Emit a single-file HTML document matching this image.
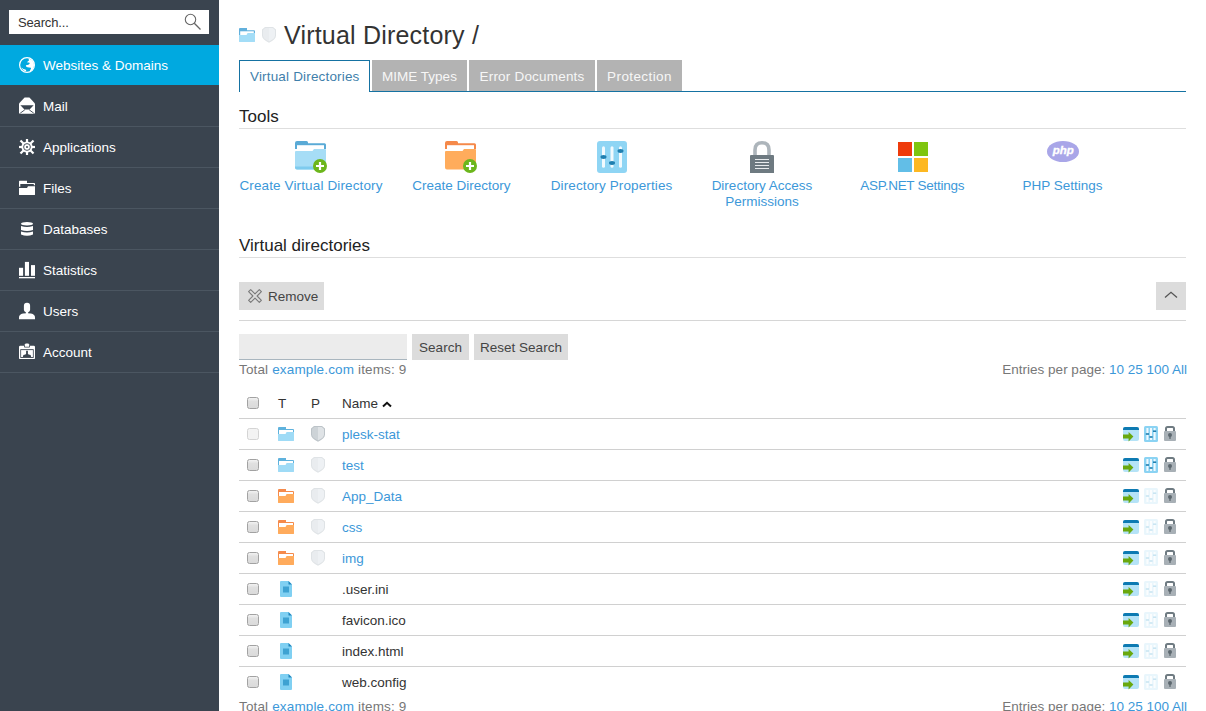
<!DOCTYPE html>
<html><head><meta charset="utf-8">
<style>
*{margin:0;padding:0;box-sizing:border-box}
html,body{width:1206px;height:711px;overflow:hidden;background:#fff;font-family:"Liberation Sans",sans-serif;font-size:13.5px;color:#333}
.a{position:absolute}
.t{position:absolute;white-space:nowrap;line-height:1.117}
svg{position:absolute;overflow:visible}
</style></head><body>

<div class="a" style="left:0;top:0;width:219px;height:711px;background:#3a444f"></div>
<div class="a" style="left:9px;top:10px;width:200px;height:24px;background:#fff"></div>
<div class="t" style="left:18px;top:16px;font-size:13px;color:#333;letter-spacing:-0.15px;">Search...</div>
<svg style="left:184px;top:13px" width="20" height="20"><circle cx="6.5" cy="6.5" r="5.2" fill="none" stroke="#666" stroke-width="1.1"/><line x1="10.3" y1="10.3" x2="16.5" y2="16.5" stroke="#666" stroke-width="1.3"/></svg>
<div class="a" style="left:0;top:45px;width:219px;height:40px;background:#00a9e0"></div>
<div class="t" style="left:43px;top:58px;font-size:13.5px;color:#fff;">Websites &amp; Domains</div>
<div class="a" style="left:0;top:126px;width:219px;height:1px;background:#4b5661"></div>
<div class="t" style="left:43px;top:99px;font-size:13.5px;color:#fff;">Mail</div>
<div class="a" style="left:0;top:167px;width:219px;height:1px;background:#4b5661"></div>
<div class="t" style="left:43px;top:140px;font-size:13.5px;color:#fff;">Applications</div>
<div class="a" style="left:0;top:208px;width:219px;height:1px;background:#4b5661"></div>
<div class="t" style="left:43px;top:181px;font-size:13.5px;color:#fff;">Files</div>
<div class="a" style="left:0;top:249px;width:219px;height:1px;background:#4b5661"></div>
<div class="t" style="left:43px;top:222px;font-size:13.5px;color:#fff;">Databases</div>
<div class="a" style="left:0;top:290px;width:219px;height:1px;background:#4b5661"></div>
<div class="t" style="left:43px;top:263px;font-size:13.5px;color:#fff;">Statistics</div>
<div class="a" style="left:0;top:331px;width:219px;height:1px;background:#4b5661"></div>
<div class="t" style="left:43px;top:304px;font-size:13.5px;color:#fff;">Users</div>
<div class="a" style="left:0;top:372px;width:219px;height:1px;background:#4b5661"></div>
<div class="t" style="left:43px;top:345px;font-size:13.5px;color:#fff;">Account</div>
<svg style="left:19px;top:57px" width="16" height="16" viewBox="0 0 16 16"><circle cx="8" cy="8" r="7.4" fill="none" stroke="#fff" stroke-width="1.2"/><path fill="#fff" d="M9.5,1.6 C12.8,2.3 15,5 15,8.2 C15,11 13.2,13.4 10.6,14.4 L11.2,13 C12,12.2 12.2,11.4 11.8,10.8 L8.6,10.2 C7.4,10 6.6,9 7,8.2 L9.4,7.8 L10.8,6.6 L10.2,5.4 L8.2,5.6 L8.6,4.4 L10,3.6 Z"/><path fill="#fff" d="M2.6,10.4 C3.6,11.6 5,12.2 6.4,12.4 L7.2,13.2 L7,14.3 C5.2,14 3.6,12.8 2.6,11.2 Z"/></svg>
<svg style="left:19px;top:97px" width="16" height="18" viewBox="0 0 16 18"><path fill="#fff" d="M5.6,0.6 H10.4 L16,6.4 V15.6 Q16,16.8 14.8,16.8 H1.2 Q0,16.8 0,15.6 V6.4 Z"/><path fill="#3a444f" d="M1.4,8.2 H14.6 L10.6,12.4 H5.4 Z"/><path stroke="#3a444f" stroke-width="0.9" d="M1.2,16.2 L5.8,12.8 M14.8,16.2 L10.2,12.8"/></svg>
<svg style="left:19px;top:139px" width="16" height="16" viewBox="0 0 16 16"><rect x="6.9" y="0" width="2.2" height="4" fill="#fff" transform="rotate(0 8 8)"/><rect x="6.9" y="-1.2" width="2.2" height="5.2" fill="#fff" transform="rotate(45 8 8)"/><rect x="6.9" y="0" width="2.2" height="4" fill="#fff" transform="rotate(90 8 8)"/><rect x="6.9" y="-1.2" width="2.2" height="5.2" fill="#fff" transform="rotate(135 8 8)"/><rect x="6.9" y="0" width="2.2" height="4" fill="#fff" transform="rotate(180 8 8)"/><rect x="6.9" y="-1.2" width="2.2" height="5.2" fill="#fff" transform="rotate(225 8 8)"/><rect x="6.9" y="0" width="2.2" height="4" fill="#fff" transform="rotate(270 8 8)"/><rect x="6.9" y="-1.2" width="2.2" height="5.2" fill="#fff" transform="rotate(315 8 8)"/><circle cx="8" cy="8" r="5.6" fill="#fff"/><circle cx="8" cy="8" r="3.4" fill="none" stroke="#3a444f" stroke-width="0.9"/><circle cx="8" cy="8" r="1" fill="#3a444f"/></svg>
<svg style="left:19px;top:180px" width="16" height="16" viewBox="0 0 16 16"><path fill="#fff" d="M0,1.4 Q0,0.7 0.7,0.7 H8 V2.9 H15.2 Q16,2.9 16,3.7 V5.2 H14.8 V4.1 H1.3 V6.8 H0 Z"/><path fill="#fff" d="M0,7.9 H8 L9,6.2 H16 V14.4 Q16,15.1 15.3,15.1 H0.7 Q0,15.1 0,14.4 Z"/></svg>
<svg style="left:21px;top:222px" width="12" height="15" viewBox="0 0 12 15"><ellipse cx="6" cy="1.8" rx="6" ry="1.7" fill="#fff"/><path fill="#fff" d="M0,4 Q6,6 12,4 V8 Q6,10 0,8 Z"/><path fill="#fff" d="M0,9.6 Q6,11.6 12,9.6 V12.6 Q6,15 0,12.6 Z"/></svg>
<svg style="left:19px;top:261px" width="16" height="18" viewBox="0 0 16 18"><rect x="0" y="6.8" width="4.1" height="8" fill="#fff"/><rect x="5.9" y="0.9" width="4.1" height="13.9" fill="#fff"/><rect x="12" y="4.1" width="4" height="10.7" fill="#fff"/><rect x="0" y="16" width="16" height="1.3" fill="#fff"/></svg>
<svg style="left:19px;top:302px" width="16" height="18" viewBox="0 0 16 18"><rect x="4.9" y="0.7" width="6.2" height="9.6" rx="3" fill="#fff"/><rect x="6.8" y="8" width="2.4" height="4" fill="#fff"/><path fill="#fff" d="M0,15.5 Q0,12.6 4,11.6 Q8,10.8 12,11.6 Q16,12.6 16,15.5 V17.2 H0 Z"/></svg>
<svg style="left:19px;top:343px" width="16" height="17" viewBox="0 0 16 17"><path fill="#fff" d="M0,4 Q0,2.8 1.2,2.8 H14.8 Q16,2.8 16,4 V14.9 Q16,16.1 14.8,16.1 H1.2 Q0,16.1 0,14.9 Z"/><rect x="5" y="0" width="6" height="4.6" rx="0.8" fill="#3a444f"/><path fill="#fff" d="M6.7,0.5 H9.3 L10.2,1.6 V3.8 H5.8 V1.6 Z"/><rect x="1.3" y="6.2" width="13.4" height="8.7" fill="#3a444f"/><rect x="2.1" y="7.1" width="11.8" height="6.9" fill="#fff"/><path fill="#3a444f" d="M7.1,7.8 H8.9 V10.8 L9.6,11.6 L11.6,12 L12.2,14 H3.8 L4.4,12 L6.4,11.6 L7.1,10.8 Z"/></svg>
<svg style="left:239px;top:28px" width="16" height="14" viewBox="0 0 16 14"><path fill="#62b0dc" d="M0,1 Q0,0 1,0 H8 V2.2 H15 Q16,2.2 16,3.2 V12 H0 Z"/><rect x="1.2" y="3.3" width="13.6" height="5" fill="#fff"/><path fill="#a3ddf7" d="M0,7 H7.6 Q8,5 9,5 H16 V13.6 Q16,14 15.6,14 H0.4 Q0,14 0,13.6 Z"/></svg>
<svg style="left:262px;top:27px" width="14" height="16" viewBox="0 0 14 16"><path fill="#dfe3e6" d="M3,0 H11 L14,2.4 V8.5 Q14,12.5 7,15.7 Q0,12.5 0,8.5 V2.4 Z"/><path fill="#e9ecef" d="M3.3,1 H7 V14.5 Q1,11.8 1,8.5 V2.9 Z"/><path fill="#eef1f4" d="M7,1 H10.7 L13,2.9 V8.5 Q13,11.8 7,14.5 Z"/></svg>
<div class="t" style="left:284px;top:22px;font-size:25px;color:#333;letter-spacing:0.2px;">Virtual Directory /</div>
<div class="a" style="left:239px;top:91px;width:947px;height:1px;background:#1572a2"></div>
<div class="a" style="left:239px;top:60px;width:131px;height:32px;border:1px solid #1572a2;border-bottom:none;background:#fff"></div>
<div class="t" style="left:250px;top:69px;font-size:13.5px;color:#3f7fab;letter-spacing:0.17px;">Virtual Directories</div>
<div class="a" style="left:372px;top:60px;width:95px;height:31px;background:#b3b3b3"></div>
<div class="t" style="left:219.5px;width:400px;text-align:center;top:69px;font-size:13.5px;color:#f7f7f7;letter-spacing:0px;">MIME Types</div>
<div class="a" style="left:469px;top:60px;width:126px;height:31px;background:#b3b3b3"></div>
<div class="t" style="left:332.0px;width:400px;text-align:center;top:69px;font-size:13.5px;color:#f7f7f7;letter-spacing:0.2px;">Error Documents</div>
<div class="a" style="left:597px;top:60px;width:85px;height:31px;background:#b3b3b3"></div>
<div class="t" style="left:439.5px;width:400px;text-align:center;top:69px;font-size:13.5px;color:#f7f7f7;letter-spacing:0.4px;">Protection</div>
<div class="t" style="left:239px;top:107px;font-size:17px;color:#222;">Tools</div>
<div class="a" style="left:239px;top:128px;width:947px;height:1px;background:#dedede"></div>
<div class="t" style="left:111.0px;width:400px;text-align:center;top:178px;font-size:13.5px;color:#3c98d9;letter-spacing:0.13px;">Create Virtual Directory</div>
<div class="t" style="left:261.3px;width:400px;text-align:center;top:178px;font-size:13.5px;color:#3c98d9;letter-spacing:0px;">Create Directory</div>
<div class="t" style="left:411.6px;width:400px;text-align:center;top:178px;font-size:13.5px;color:#3c98d9;letter-spacing:0.12px;">Directory Properties</div>
<div class="t" style="left:561.9000000000001px;width:400px;text-align:center;top:178px;font-size:13.5px;color:#3c98d9;">Directory Access</div>
<div class="t" style="left:561.9000000000001px;width:400px;text-align:center;top:194px;font-size:13.5px;color:#3c98d9;">Permissions</div>
<div class="t" style="left:712.2px;width:400px;text-align:center;top:178px;font-size:13.5px;color:#3c98d9;letter-spacing:-0.28px;">ASP.NET Settings</div>
<div class="t" style="left:862.5px;width:400px;text-align:center;top:178px;font-size:13.5px;color:#3c98d9;letter-spacing:0px;">PHP Settings</div>
<svg style="left:295px;top:141px" width="33" height="33" viewBox="0 0 33 33"><path fill="#5aaad6" d="M0,2 Q0,0 2,0 H11.5 Q13,0 13,1.5 V2.2 H29.5 Q31,2.2 31,3.7 V8 H0 Z"/><path fill="#fff" d="M2,4.2 H29 V10 H2 Z"/><path fill="#a6ddf6" d="M0,11 Q0,10 1,10 H17.5 L19,8 H30 Q31,8 31,9 V26.5 Q31,28.5 29,28.5 H2 Q0,28.5 0,26.5 Z"/><path fill="#7ecbee" d="M0,25.5 H31 V26.5 Q31,28.5 29,28.5 H2 Q0,28.5 0,26.5 Z"/><circle cx="25" cy="25" r="7" fill="#6cb61c"/><path stroke="#fff" stroke-width="2.2" d="M25,21 V29 M21,25 H29"/></svg>
<svg style="left:445px;top:141px" width="33" height="33" viewBox="0 0 33 33"><path fill="#f5894a" d="M0,2 Q0,0 2,0 H11.5 Q13,0 13,1.5 V2.2 H29.5 Q31,2.2 31,3.7 V8 H0 Z"/><path fill="#fff" d="M2,4.2 H29 V10 H2 Z"/><path fill="#ffac5c" d="M0,11 Q0,10 1,10 H17.5 L19,8 H30 Q31,8 31,9 V26.5 Q31,28.5 29,28.5 H2 Q0,28.5 0,26.5 Z"/><circle cx="25" cy="25" r="7" fill="#6cb61c"/><path stroke="#fff" stroke-width="2.2" d="M25,21 V29 M21,25 H29"/></svg>
<svg style="left:597px;top:141px" width="30" height="32" viewBox="0 0 30 32"><rect x="0" y="0" width="30" height="32" rx="3" fill="#8fd5f4"/><rect x="5" y="5.3" width="3" height="21.5" rx="1.5" fill="#f2fafe"/><rect x="13.5" y="5.3" width="3" height="21.5" rx="1.5" fill="#f2fafe"/><rect x="22" y="5.3" width="3" height="21.5" rx="1.5" fill="#f2fafe"/><ellipse cx="6.5" cy="16" rx="3" ry="1.9" fill="#1f7fb0"/><ellipse cx="15" cy="22" rx="3" ry="1.9" fill="#1f7fb0"/><ellipse cx="23.5" cy="10" rx="3" ry="1.9" fill="#1f7fb0"/></svg>
<svg style="left:750px;top:141px" width="24" height="32" viewBox="0 0 24 32"><path fill="none" stroke="#adb5bb" stroke-width="3.6" d="M5,15 V9 Q5,1.8 12,1.8 Q19,1.8 19,9 V15"/><path fill="#6e7a81" d="M0,15 Q0,14 1,14 H23 Q24,14 24,15 V32 H0 Z"/><path stroke="#e8ebed" stroke-width="1" d="M5,18.5 H19 M5,21.5 H19 M5,24.5 H19 M5,27.5 H19"/></svg>
<svg style="left:898px;top:142px" width="30" height="30" viewBox="0 0 30 30"><rect x="0" y="0" width="14" height="14" fill="#ee3b0b"/><rect x="16" y="0" width="14" height="14" fill="#7fc50f"/><rect x="0" y="16" width="14" height="14" fill="#62bee7"/><rect x="16" y="16" width="14" height="14" fill="#fdb822"/></svg>
<svg style="left:1047px;top:141px" width="32" height="21" viewBox="0 0 32 21"><ellipse cx="16" cy="10.5" rx="16" ry="10.5" fill="#a9a6e8"/><text x="16.3" y="12.6" text-anchor="middle" font-family="Liberation Sans" font-weight="bold" font-style="italic" font-size="11.5" fill="#fff" stroke="#fff" stroke-width="0.35">php</text></svg>
<div class="t" style="left:239px;top:236px;font-size:17px;color:#222;">Virtual directories</div>
<div class="a" style="left:239px;top:257px;width:947px;height:1px;background:#dedede"></div>
<div class="a" style="left:239px;top:282px;width:85px;height:28px;background:#dcdcdc"></div>
<svg style="left:248px;top:289px" width="14" height="14" viewBox="0 0 14 14"><path fill="none" stroke="#7a7a7a" stroke-width="1.1" stroke-linejoin="round" d="M2.70,0.60 L7.00,4.90 L11.30,0.60 L13.40,2.70 L9.10,7.00 L13.40,11.30 L11.30,13.40 L7.00,9.10 L2.70,13.40 L0.60,11.30 L4.90,7.00 L0.60,2.70 Z"/></svg>
<div class="t" style="left:268px;top:289px;font-size:13.5px;color:#444;">Remove</div>
<div class="a" style="left:1156px;top:282px;width:30px;height:28px;background:#dcdcdc"></div>
<svg style="left:1164px;top:291px" width="14" height="8" viewBox="0 0 14 8"><path fill="none" stroke="#555" stroke-width="1.3" d="M1,6.5 L7,1.3 L13,6.5"/></svg>
<div class="a" style="left:239px;top:320px;width:947px;height:1px;background:#d6d6d6"></div>
<div class="a" style="left:239px;top:334px;width:168px;height:26px;background:#ececec;border-bottom:1px solid #a9b6bf"></div>
<div class="a" style="left:412px;top:334px;width:57px;height:26px;background:#dcdcdc"></div>
<div class="t" style="left:240.5px;width:400px;text-align:center;top:340px;font-size:13.5px;color:#444;">Search</div>
<div class="a" style="left:474px;top:334px;width:94px;height:26px;background:#dcdcdc"></div>
<div class="t" style="left:321px;width:400px;text-align:center;top:340px;font-size:13.5px;color:#444;">Reset Search</div>
<div class="t" style="left:239px;top:362px;font-size:13.5px;color:#777;letter-spacing:0.15px">Total <span style="color:#3c98d9">example.com</span> items: 9</div>
<div class="t" style="right:19px;top:362px;font-size:13.5px;color:#777">Entries per page: <span style="color:#3c98d9">10 25 100 All</span></div>
<div class="a" style="left:247px;top:397px;width:12px;height:12px;border:1px solid #a2a2a2;border-radius:2.5px;background:linear-gradient(#f2f2f2,#e0e0e0 35%,#dadada)"></div>
<div class="t" style="left:278px;top:396px;font-size:13.5px;color:#333;">T</div>
<div class="t" style="left:311px;top:396px;font-size:13.5px;color:#333;">P</div>
<div class="t" style="left:342px;top:396px;font-size:13.5px;color:#333;">Name</div>
<svg style="left:382px;top:401px" width="10" height="7" viewBox="0 0 10 7"><path fill="none" stroke="#111" stroke-width="2" d="M1,5.5 L5,1.8 L9,5.5"/></svg>
<div class="a" style="left:239px;top:418px;width:947px;height:1px;background:#d0d0d0"></div>
<div class="a" style="left:247px;top:428px;width:12px;height:12px;border:1px solid #d4d4d4;border-radius:2.5px;background:#f3f3f3"></div>
<svg style="left:278px;top:427px" width="16" height="14" viewBox="0 0 16 14"><path fill="#5fb2dd" d="M0,1 Q0,0 1,0 H8 V2 H15 Q16,2 16,3 V12 H0 Z"/><rect x="1" y="3" width="14" height="5" fill="#fff"/><path fill="#9fdbf6" d="M0,7 H7.6 Q8,5 9,5 H16 V13.6 Q16,14 15.6,14 H0.4 Q0,14 0,13.6 Z"/></svg>
<svg style="left:311px;top:426px" width="14" height="16" viewBox="0 0 14 16"><path fill="#bcc3c8" d="M3,0 H11 L14,2.4 V8.5 Q14,12.5 7,15.7 Q0,12.5 0,8.5 V2.4 Z"/><path fill="#cdd3d7" d="M3.3,1 H7 V14.5 Q1,11.8 1,8.5 V2.9 Z"/><path fill="#dfe3e6" d="M7,1 H10.7 L13,2.9 V8.5 Q13,11.8 7,14.5 Z"/></svg>
<div class="t" style="left:342px;top:427px;font-size:13.5px;color:#3c98d9;">plesk-stat</div>
<svg style="left:1123px;top:427px" width="16" height="16" viewBox="0 0 16 16"><path fill="#b5e3f7" d="M0,2 Q0,0 2,0 H14 Q16,0 16,2 V12 Q16,14 14,14 H2 Q0,14 0,12 Z"/><path fill="#0d7ab2" d="M0,2 Q0,0 2,0 H14 Q16,0 16,2 V3 H0 Z"/><path fill="#69a80e" d="M0,7.6 H5.6 V5 L10.4,9.6 L5.6,14.4 V11.6 H0 Z"/></svg>
<svg style="left:1144px;top:426px" width="14" height="16" viewBox="0 0 14 16"><rect x="0" y="0" width="14" height="16" rx="1.5" fill="#8bd3f3"/><rect x="2.4" y="2" width="2" height="12" fill="#f0f9fe"/><rect x="6" y="2" width="2" height="12" fill="#f0f9fe"/><rect x="9.6" y="2" width="2" height="12" fill="#f0f9fe"/><rect x="1.8" y="7.2" width="3.2" height="1.6" fill="#1f7fb0"/><rect x="5.4" y="10.2" width="3.2" height="1.6" fill="#1f7fb0"/><rect x="9" y="4.4" width="3.2" height="1.6" fill="#1f7fb0"/></svg>
<svg style="left:1164px;top:426px" width="12" height="16" viewBox="0 0 12 16"><path fill="none" stroke="#6f7b82" stroke-width="2" d="M2,6 V2.6 Q2,1 3.6,1 H8.4 Q10,1 10,2.6 V6"/><rect x="0" y="5" width="12" height="10" rx="1" fill="#a8b0b6"/><circle cx="6" cy="9" r="2" fill="#5d686f"/><rect x="5.3" y="9.5" width="1.4" height="3.4" fill="#5d686f"/></svg>
<div class="a" style="left:239px;top:449px;width:947px;height:1px;background:#d0d0d0"></div>
<div class="a" style="left:247px;top:459px;width:12px;height:12px;border:1px solid #a2a2a2;border-radius:2.5px;background:linear-gradient(#f2f2f2,#e0e0e0 35%,#dadada)"></div>
<svg style="left:278px;top:458px" width="16" height="14" viewBox="0 0 16 14"><path fill="#5fb2dd" d="M0,1 Q0,0 1,0 H8 V2 H15 Q16,2 16,3 V12 H0 Z"/><rect x="1" y="3" width="14" height="5" fill="#fff"/><path fill="#9fdbf6" d="M0,7 H7.6 Q8,5 9,5 H16 V13.6 Q16,14 15.6,14 H0.4 Q0,14 0,13.6 Z"/></svg>
<svg style="left:311px;top:457px" width="14" height="16" viewBox="0 0 14 16"><path fill="#dfe3e6" d="M3,0 H11 L14,2.4 V8.5 Q14,12.5 7,15.7 Q0,12.5 0,8.5 V2.4 Z"/><path fill="#e9ecef" d="M3.3,1 H7 V14.5 Q1,11.8 1,8.5 V2.9 Z"/><path fill="#eef1f4" d="M7,1 H10.7 L13,2.9 V8.5 Q13,11.8 7,14.5 Z"/></svg>
<div class="t" style="left:342px;top:458px;font-size:13.5px;color:#3c98d9;">test</div>
<svg style="left:1123px;top:458px" width="16" height="16" viewBox="0 0 16 16"><path fill="#b5e3f7" d="M0,2 Q0,0 2,0 H14 Q16,0 16,2 V12 Q16,14 14,14 H2 Q0,14 0,12 Z"/><path fill="#0d7ab2" d="M0,2 Q0,0 2,0 H14 Q16,0 16,2 V3 H0 Z"/><path fill="#69a80e" d="M0,7.6 H5.6 V5 L10.4,9.6 L5.6,14.4 V11.6 H0 Z"/></svg>
<svg style="left:1144px;top:457px" width="14" height="16" viewBox="0 0 14 16"><rect x="0" y="0" width="14" height="16" rx="1.5" fill="#8bd3f3"/><rect x="2.4" y="2" width="2" height="12" fill="#f0f9fe"/><rect x="6" y="2" width="2" height="12" fill="#f0f9fe"/><rect x="9.6" y="2" width="2" height="12" fill="#f0f9fe"/><rect x="1.8" y="7.2" width="3.2" height="1.6" fill="#1f7fb0"/><rect x="5.4" y="10.2" width="3.2" height="1.6" fill="#1f7fb0"/><rect x="9" y="4.4" width="3.2" height="1.6" fill="#1f7fb0"/></svg>
<svg style="left:1164px;top:457px" width="12" height="16" viewBox="0 0 12 16"><path fill="none" stroke="#6f7b82" stroke-width="2" d="M2,6 V2.6 Q2,1 3.6,1 H8.4 Q10,1 10,2.6 V6"/><rect x="0" y="5" width="12" height="10" rx="1" fill="#a8b0b6"/><circle cx="6" cy="9" r="2" fill="#5d686f"/><rect x="5.3" y="9.5" width="1.4" height="3.4" fill="#5d686f"/></svg>
<div class="a" style="left:239px;top:480px;width:947px;height:1px;background:#d0d0d0"></div>
<div class="a" style="left:247px;top:490px;width:12px;height:12px;border:1px solid #a2a2a2;border-radius:2.5px;background:linear-gradient(#f2f2f2,#e0e0e0 35%,#dadada)"></div>
<svg style="left:278px;top:489px" width="16" height="14" viewBox="0 0 16 14"><path fill="#f58a4b" d="M0,1 Q0,0 1,0 H8 V2 H15 Q16,2 16,3 V12 H0 Z"/><rect x="1" y="3" width="14" height="5" fill="#fff"/><path fill="#ffab5c" d="M0,7 H7.6 Q8,5 9,5 H16 V13.6 Q16,14 15.6,14 H0.4 Q0,14 0,13.6 Z"/></svg>
<svg style="left:311px;top:488px" width="14" height="16" viewBox="0 0 14 16"><path fill="#dfe3e6" d="M3,0 H11 L14,2.4 V8.5 Q14,12.5 7,15.7 Q0,12.5 0,8.5 V2.4 Z"/><path fill="#e9ecef" d="M3.3,1 H7 V14.5 Q1,11.8 1,8.5 V2.9 Z"/><path fill="#eef1f4" d="M7,1 H10.7 L13,2.9 V8.5 Q13,11.8 7,14.5 Z"/></svg>
<div class="t" style="left:342px;top:489px;font-size:13.5px;color:#3c98d9;">App_Data</div>
<svg style="left:1123px;top:489px" width="16" height="16" viewBox="0 0 16 16"><path fill="#b5e3f7" d="M0,2 Q0,0 2,0 H14 Q16,0 16,2 V12 Q16,14 14,14 H2 Q0,14 0,12 Z"/><path fill="#0d7ab2" d="M0,2 Q0,0 2,0 H14 Q16,0 16,2 V3 H0 Z"/><path fill="#69a80e" d="M0,7.6 H5.6 V5 L10.4,9.6 L5.6,14.4 V11.6 H0 Z"/></svg>
<svg style="left:1144px;top:488px" width="14" height="16" viewBox="0 0 14 16"><rect x="0" y="0" width="14" height="16" rx="1.5" fill="#e9f6fc"/><rect x="2.4" y="2" width="2" height="12" fill="#fbfdfe"/><rect x="6" y="2" width="2" height="12" fill="#fbfdfe"/><rect x="9.6" y="2" width="2" height="12" fill="#fbfdfe"/><rect x="1.8" y="7.2" width="3.2" height="1.6" fill="#c9e5f2"/><rect x="5.4" y="10.2" width="3.2" height="1.6" fill="#c9e5f2"/><rect x="9" y="4.4" width="3.2" height="1.6" fill="#c9e5f2"/></svg>
<svg style="left:1164px;top:488px" width="12" height="16" viewBox="0 0 12 16"><path fill="none" stroke="#6f7b82" stroke-width="2" d="M2,6 V2.6 Q2,1 3.6,1 H8.4 Q10,1 10,2.6 V6"/><rect x="0" y="5" width="12" height="10" rx="1" fill="#a8b0b6"/><circle cx="6" cy="9" r="2" fill="#5d686f"/><rect x="5.3" y="9.5" width="1.4" height="3.4" fill="#5d686f"/></svg>
<div class="a" style="left:239px;top:511px;width:947px;height:1px;background:#d0d0d0"></div>
<div class="a" style="left:247px;top:521px;width:12px;height:12px;border:1px solid #a2a2a2;border-radius:2.5px;background:linear-gradient(#f2f2f2,#e0e0e0 35%,#dadada)"></div>
<svg style="left:278px;top:520px" width="16" height="14" viewBox="0 0 16 14"><path fill="#f58a4b" d="M0,1 Q0,0 1,0 H8 V2 H15 Q16,2 16,3 V12 H0 Z"/><rect x="1" y="3" width="14" height="5" fill="#fff"/><path fill="#ffab5c" d="M0,7 H7.6 Q8,5 9,5 H16 V13.6 Q16,14 15.6,14 H0.4 Q0,14 0,13.6 Z"/></svg>
<svg style="left:311px;top:519px" width="14" height="16" viewBox="0 0 14 16"><path fill="#dfe3e6" d="M3,0 H11 L14,2.4 V8.5 Q14,12.5 7,15.7 Q0,12.5 0,8.5 V2.4 Z"/><path fill="#e9ecef" d="M3.3,1 H7 V14.5 Q1,11.8 1,8.5 V2.9 Z"/><path fill="#eef1f4" d="M7,1 H10.7 L13,2.9 V8.5 Q13,11.8 7,14.5 Z"/></svg>
<div class="t" style="left:342px;top:520px;font-size:13.5px;color:#3c98d9;">css</div>
<svg style="left:1123px;top:520px" width="16" height="16" viewBox="0 0 16 16"><path fill="#b5e3f7" d="M0,2 Q0,0 2,0 H14 Q16,0 16,2 V12 Q16,14 14,14 H2 Q0,14 0,12 Z"/><path fill="#0d7ab2" d="M0,2 Q0,0 2,0 H14 Q16,0 16,2 V3 H0 Z"/><path fill="#69a80e" d="M0,7.6 H5.6 V5 L10.4,9.6 L5.6,14.4 V11.6 H0 Z"/></svg>
<svg style="left:1144px;top:519px" width="14" height="16" viewBox="0 0 14 16"><rect x="0" y="0" width="14" height="16" rx="1.5" fill="#e9f6fc"/><rect x="2.4" y="2" width="2" height="12" fill="#fbfdfe"/><rect x="6" y="2" width="2" height="12" fill="#fbfdfe"/><rect x="9.6" y="2" width="2" height="12" fill="#fbfdfe"/><rect x="1.8" y="7.2" width="3.2" height="1.6" fill="#c9e5f2"/><rect x="5.4" y="10.2" width="3.2" height="1.6" fill="#c9e5f2"/><rect x="9" y="4.4" width="3.2" height="1.6" fill="#c9e5f2"/></svg>
<svg style="left:1164px;top:519px" width="12" height="16" viewBox="0 0 12 16"><path fill="none" stroke="#6f7b82" stroke-width="2" d="M2,6 V2.6 Q2,1 3.6,1 H8.4 Q10,1 10,2.6 V6"/><rect x="0" y="5" width="12" height="10" rx="1" fill="#a8b0b6"/><circle cx="6" cy="9" r="2" fill="#5d686f"/><rect x="5.3" y="9.5" width="1.4" height="3.4" fill="#5d686f"/></svg>
<div class="a" style="left:239px;top:542px;width:947px;height:1px;background:#d0d0d0"></div>
<div class="a" style="left:247px;top:552px;width:12px;height:12px;border:1px solid #a2a2a2;border-radius:2.5px;background:linear-gradient(#f2f2f2,#e0e0e0 35%,#dadada)"></div>
<svg style="left:278px;top:551px" width="16" height="14" viewBox="0 0 16 14"><path fill="#f58a4b" d="M0,1 Q0,0 1,0 H8 V2 H15 Q16,2 16,3 V12 H0 Z"/><rect x="1" y="3" width="14" height="5" fill="#fff"/><path fill="#ffab5c" d="M0,7 H7.6 Q8,5 9,5 H16 V13.6 Q16,14 15.6,14 H0.4 Q0,14 0,13.6 Z"/></svg>
<svg style="left:311px;top:550px" width="14" height="16" viewBox="0 0 14 16"><path fill="#dfe3e6" d="M3,0 H11 L14,2.4 V8.5 Q14,12.5 7,15.7 Q0,12.5 0,8.5 V2.4 Z"/><path fill="#e9ecef" d="M3.3,1 H7 V14.5 Q1,11.8 1,8.5 V2.9 Z"/><path fill="#eef1f4" d="M7,1 H10.7 L13,2.9 V8.5 Q13,11.8 7,14.5 Z"/></svg>
<div class="t" style="left:342px;top:551px;font-size:13.5px;color:#3c98d9;">img</div>
<svg style="left:1123px;top:551px" width="16" height="16" viewBox="0 0 16 16"><path fill="#b5e3f7" d="M0,2 Q0,0 2,0 H14 Q16,0 16,2 V12 Q16,14 14,14 H2 Q0,14 0,12 Z"/><path fill="#0d7ab2" d="M0,2 Q0,0 2,0 H14 Q16,0 16,2 V3 H0 Z"/><path fill="#69a80e" d="M0,7.6 H5.6 V5 L10.4,9.6 L5.6,14.4 V11.6 H0 Z"/></svg>
<svg style="left:1144px;top:550px" width="14" height="16" viewBox="0 0 14 16"><rect x="0" y="0" width="14" height="16" rx="1.5" fill="#e9f6fc"/><rect x="2.4" y="2" width="2" height="12" fill="#fbfdfe"/><rect x="6" y="2" width="2" height="12" fill="#fbfdfe"/><rect x="9.6" y="2" width="2" height="12" fill="#fbfdfe"/><rect x="1.8" y="7.2" width="3.2" height="1.6" fill="#c9e5f2"/><rect x="5.4" y="10.2" width="3.2" height="1.6" fill="#c9e5f2"/><rect x="9" y="4.4" width="3.2" height="1.6" fill="#c9e5f2"/></svg>
<svg style="left:1164px;top:550px" width="12" height="16" viewBox="0 0 12 16"><path fill="none" stroke="#6f7b82" stroke-width="2" d="M2,6 V2.6 Q2,1 3.6,1 H8.4 Q10,1 10,2.6 V6"/><rect x="0" y="5" width="12" height="10" rx="1" fill="#a8b0b6"/><circle cx="6" cy="9" r="2" fill="#5d686f"/><rect x="5.3" y="9.5" width="1.4" height="3.4" fill="#5d686f"/></svg>
<div class="a" style="left:239px;top:573px;width:947px;height:1px;background:#d0d0d0"></div>
<div class="a" style="left:247px;top:583px;width:12px;height:12px;border:1px solid #a2a2a2;border-radius:2.5px;background:linear-gradient(#f2f2f2,#e0e0e0 35%,#dadada)"></div>
<svg style="left:280px;top:581px" width="12" height="16" viewBox="0 0 12 16"><path fill="#80d0f2" d="M1,0 H8.5 L12,3.5 V15 Q12,16 11,16 H1 Q0,16 0,15 V1 Q0,0 1,0 Z"/><path fill="#1f86bd" d="M8.5,0 L12,3.5 H8.5 Z"/><rect x="3" y="5.5" width="6" height="6" fill="#3ea2d2"/></svg>
<div class="t" style="left:342px;top:582px;font-size:13.5px;color:#333;">.user.ini</div>
<svg style="left:1123px;top:582px" width="16" height="16" viewBox="0 0 16 16"><path fill="#b5e3f7" d="M0,2 Q0,0 2,0 H14 Q16,0 16,2 V12 Q16,14 14,14 H2 Q0,14 0,12 Z"/><path fill="#0d7ab2" d="M0,2 Q0,0 2,0 H14 Q16,0 16,2 V3 H0 Z"/><path fill="#69a80e" d="M0,7.6 H5.6 V5 L10.4,9.6 L5.6,14.4 V11.6 H0 Z"/></svg>
<svg style="left:1144px;top:581px" width="14" height="16" viewBox="0 0 14 16"><rect x="0" y="0" width="14" height="16" rx="1.5" fill="#e9f6fc"/><rect x="2.4" y="2" width="2" height="12" fill="#fbfdfe"/><rect x="6" y="2" width="2" height="12" fill="#fbfdfe"/><rect x="9.6" y="2" width="2" height="12" fill="#fbfdfe"/><rect x="1.8" y="7.2" width="3.2" height="1.6" fill="#c9e5f2"/><rect x="5.4" y="10.2" width="3.2" height="1.6" fill="#c9e5f2"/><rect x="9" y="4.4" width="3.2" height="1.6" fill="#c9e5f2"/></svg>
<svg style="left:1164px;top:581px" width="12" height="16" viewBox="0 0 12 16"><path fill="none" stroke="#6f7b82" stroke-width="2" d="M2,6 V2.6 Q2,1 3.6,1 H8.4 Q10,1 10,2.6 V6"/><rect x="0" y="5" width="12" height="10" rx="1" fill="#a8b0b6"/><circle cx="6" cy="9" r="2" fill="#5d686f"/><rect x="5.3" y="9.5" width="1.4" height="3.4" fill="#5d686f"/></svg>
<div class="a" style="left:239px;top:604px;width:947px;height:1px;background:#d0d0d0"></div>
<div class="a" style="left:247px;top:614px;width:12px;height:12px;border:1px solid #a2a2a2;border-radius:2.5px;background:linear-gradient(#f2f2f2,#e0e0e0 35%,#dadada)"></div>
<svg style="left:280px;top:612px" width="12" height="16" viewBox="0 0 12 16"><path fill="#80d0f2" d="M1,0 H8.5 L12,3.5 V15 Q12,16 11,16 H1 Q0,16 0,15 V1 Q0,0 1,0 Z"/><path fill="#1f86bd" d="M8.5,0 L12,3.5 H8.5 Z"/><rect x="3" y="5.5" width="6" height="6" fill="#3ea2d2"/></svg>
<div class="t" style="left:342px;top:613px;font-size:13.5px;color:#333;">favicon.ico</div>
<svg style="left:1123px;top:613px" width="16" height="16" viewBox="0 0 16 16"><path fill="#b5e3f7" d="M0,2 Q0,0 2,0 H14 Q16,0 16,2 V12 Q16,14 14,14 H2 Q0,14 0,12 Z"/><path fill="#0d7ab2" d="M0,2 Q0,0 2,0 H14 Q16,0 16,2 V3 H0 Z"/><path fill="#69a80e" d="M0,7.6 H5.6 V5 L10.4,9.6 L5.6,14.4 V11.6 H0 Z"/></svg>
<svg style="left:1144px;top:612px" width="14" height="16" viewBox="0 0 14 16"><rect x="0" y="0" width="14" height="16" rx="1.5" fill="#e9f6fc"/><rect x="2.4" y="2" width="2" height="12" fill="#fbfdfe"/><rect x="6" y="2" width="2" height="12" fill="#fbfdfe"/><rect x="9.6" y="2" width="2" height="12" fill="#fbfdfe"/><rect x="1.8" y="7.2" width="3.2" height="1.6" fill="#c9e5f2"/><rect x="5.4" y="10.2" width="3.2" height="1.6" fill="#c9e5f2"/><rect x="9" y="4.4" width="3.2" height="1.6" fill="#c9e5f2"/></svg>
<svg style="left:1164px;top:612px" width="12" height="16" viewBox="0 0 12 16"><path fill="none" stroke="#6f7b82" stroke-width="2" d="M2,6 V2.6 Q2,1 3.6,1 H8.4 Q10,1 10,2.6 V6"/><rect x="0" y="5" width="12" height="10" rx="1" fill="#a8b0b6"/><circle cx="6" cy="9" r="2" fill="#5d686f"/><rect x="5.3" y="9.5" width="1.4" height="3.4" fill="#5d686f"/></svg>
<div class="a" style="left:239px;top:635px;width:947px;height:1px;background:#d0d0d0"></div>
<div class="a" style="left:247px;top:645px;width:12px;height:12px;border:1px solid #a2a2a2;border-radius:2.5px;background:linear-gradient(#f2f2f2,#e0e0e0 35%,#dadada)"></div>
<svg style="left:280px;top:643px" width="12" height="16" viewBox="0 0 12 16"><path fill="#80d0f2" d="M1,0 H8.5 L12,3.5 V15 Q12,16 11,16 H1 Q0,16 0,15 V1 Q0,0 1,0 Z"/><path fill="#1f86bd" d="M8.5,0 L12,3.5 H8.5 Z"/><rect x="3" y="5.5" width="6" height="6" fill="#3ea2d2"/></svg>
<div class="t" style="left:342px;top:644px;font-size:13.5px;color:#333;">index.html</div>
<svg style="left:1123px;top:644px" width="16" height="16" viewBox="0 0 16 16"><path fill="#b5e3f7" d="M0,2 Q0,0 2,0 H14 Q16,0 16,2 V12 Q16,14 14,14 H2 Q0,14 0,12 Z"/><path fill="#0d7ab2" d="M0,2 Q0,0 2,0 H14 Q16,0 16,2 V3 H0 Z"/><path fill="#69a80e" d="M0,7.6 H5.6 V5 L10.4,9.6 L5.6,14.4 V11.6 H0 Z"/></svg>
<svg style="left:1144px;top:643px" width="14" height="16" viewBox="0 0 14 16"><rect x="0" y="0" width="14" height="16" rx="1.5" fill="#e9f6fc"/><rect x="2.4" y="2" width="2" height="12" fill="#fbfdfe"/><rect x="6" y="2" width="2" height="12" fill="#fbfdfe"/><rect x="9.6" y="2" width="2" height="12" fill="#fbfdfe"/><rect x="1.8" y="7.2" width="3.2" height="1.6" fill="#c9e5f2"/><rect x="5.4" y="10.2" width="3.2" height="1.6" fill="#c9e5f2"/><rect x="9" y="4.4" width="3.2" height="1.6" fill="#c9e5f2"/></svg>
<svg style="left:1164px;top:643px" width="12" height="16" viewBox="0 0 12 16"><path fill="none" stroke="#6f7b82" stroke-width="2" d="M2,6 V2.6 Q2,1 3.6,1 H8.4 Q10,1 10,2.6 V6"/><rect x="0" y="5" width="12" height="10" rx="1" fill="#a8b0b6"/><circle cx="6" cy="9" r="2" fill="#5d686f"/><rect x="5.3" y="9.5" width="1.4" height="3.4" fill="#5d686f"/></svg>
<div class="a" style="left:239px;top:666px;width:947px;height:1px;background:#d0d0d0"></div>
<div class="a" style="left:247px;top:676px;width:12px;height:12px;border:1px solid #a2a2a2;border-radius:2.5px;background:linear-gradient(#f2f2f2,#e0e0e0 35%,#dadada)"></div>
<svg style="left:280px;top:674px" width="12" height="16" viewBox="0 0 12 16"><path fill="#80d0f2" d="M1,0 H8.5 L12,3.5 V15 Q12,16 11,16 H1 Q0,16 0,15 V1 Q0,0 1,0 Z"/><path fill="#1f86bd" d="M8.5,0 L12,3.5 H8.5 Z"/><rect x="3" y="5.5" width="6" height="6" fill="#3ea2d2"/></svg>
<div class="t" style="left:342px;top:675px;font-size:13.5px;color:#333;">web.config</div>
<svg style="left:1123px;top:675px" width="16" height="16" viewBox="0 0 16 16"><path fill="#b5e3f7" d="M0,2 Q0,0 2,0 H14 Q16,0 16,2 V12 Q16,14 14,14 H2 Q0,14 0,12 Z"/><path fill="#0d7ab2" d="M0,2 Q0,0 2,0 H14 Q16,0 16,2 V3 H0 Z"/><path fill="#69a80e" d="M0,7.6 H5.6 V5 L10.4,9.6 L5.6,14.4 V11.6 H0 Z"/></svg>
<svg style="left:1144px;top:674px" width="14" height="16" viewBox="0 0 14 16"><rect x="0" y="0" width="14" height="16" rx="1.5" fill="#e9f6fc"/><rect x="2.4" y="2" width="2" height="12" fill="#fbfdfe"/><rect x="6" y="2" width="2" height="12" fill="#fbfdfe"/><rect x="9.6" y="2" width="2" height="12" fill="#fbfdfe"/><rect x="1.8" y="7.2" width="3.2" height="1.6" fill="#c9e5f2"/><rect x="5.4" y="10.2" width="3.2" height="1.6" fill="#c9e5f2"/><rect x="9" y="4.4" width="3.2" height="1.6" fill="#c9e5f2"/></svg>
<svg style="left:1164px;top:674px" width="12" height="16" viewBox="0 0 12 16"><path fill="none" stroke="#6f7b82" stroke-width="2" d="M2,6 V2.6 Q2,1 3.6,1 H8.4 Q10,1 10,2.6 V6"/><rect x="0" y="5" width="12" height="10" rx="1" fill="#a8b0b6"/><circle cx="6" cy="9" r="2" fill="#5d686f"/><rect x="5.3" y="9.5" width="1.4" height="3.4" fill="#5d686f"/></svg>
<div class="t" style="left:239px;top:699px;font-size:13.5px;color:#777;letter-spacing:0.15px">Total <span style="color:#3c98d9">example.com</span> items: 9</div>
<div class="t" style="right:19px;top:699px;font-size:13.5px;color:#777">Entries per page: <span style="color:#3c98d9">10 25 100 All</span></div>
</body></html>
